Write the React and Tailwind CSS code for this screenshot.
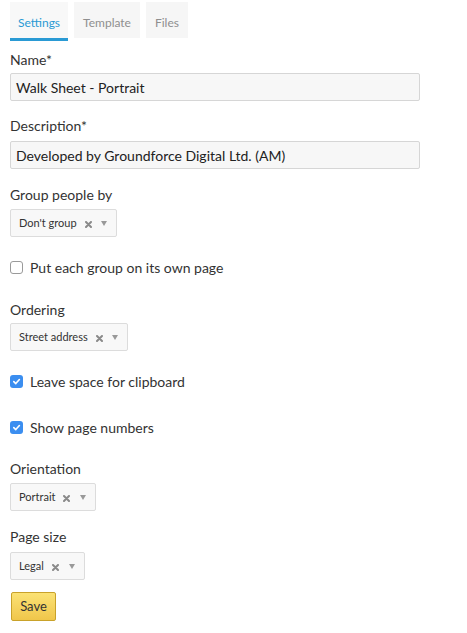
import React from 'react';

function Select({ value, width }) {
  return (
    <div
      className={`flex items-center h-7 pl-[8px] pr-[9px] bg-[#f8f8f8] border border-[#dcdcdc] rounded-[2px] text-[11px] text-[#333] ${width}`}
    >
      <span>{value}</span>
      <svg className="ml-[8px] mt-[2px]" width="7" height="7" viewBox="0 0 7 7">
        <path d="M1 1 L6 6 M6 1 L1 6" stroke="#8a8a8a" strokeWidth="2" strokeLinecap="round" />
      </svg>
      <svg className="ml-auto" width="6" height="5" viewBox="0 0 6 5">
        <path d="M0 0 H6 L3 5 Z" fill="#999" />
      </svg>
    </div>
  );
}

function Check({ checked, label, className }) {
  return (
    <label className={`flex items-center h-5 ${className}`}>
      {checked ? (
        <span className="w-[13px] h-[13px] rounded-[3px] bg-[#3b8ef0] flex items-center justify-center">
          <svg width="9" height="9" viewBox="0 0 10 10">
            <path d="M2 5.2 L4.2 7.3 L8.2 2.8" fill="none" stroke="#fff" strokeWidth="1.8" strokeLinecap="round" strokeLinejoin="round" />
          </svg>
        </span>
      ) : (
        <span className="w-[13px] h-[13px] rounded-[3px] bg-white border border-[#9a9a9a]" />
      )}
      <span className="ml-[7px] text-[14px] text-[#333]">{label}</span>
    </label>
  );
}

function Label({ children, className = '' }) {
  return <div className={`h-5 leading-5 text-[14px] text-[#333] ${className}`}>{children}</div>;
}

function TextInput({ value }) {
  return (
    <div className="h-7 w-[410px] flex items-center px-[5px] bg-[#f7f7f7] border border-[#d6d6d6] rounded-[2px] text-[14px] text-[#222]">
      {value}
    </div>
  );
}

export default function App() {
  return (
    <div className="w-[467px] h-[633px] bg-white px-[10px] pt-[2px]" style={{ fontFamily: 'Lato, "Open Sans", sans-serif' }}>
      <div className="flex gap-[6px]">
        <div className="h-[39px] px-[8px] flex items-center bg-[#f8f8f8] border-b-[3px] border-[#2a9ad4] text-[12px] text-[#2a9ad4] pt-[6px]">
          Settings
        </div>
        <div className="h-[36px] px-[9px] flex items-center bg-[#f6f6f6] text-[12px] text-[#8f8f8f] pt-[6px]">Template</div>
        <div className="h-[36px] px-[9px] flex items-center bg-[#f6f6f6] text-[12px] text-[#8f8f8f] pt-[6px]">Files</div>
      </div>

      <Label className="mt-[9px] mb-[3px]">Name*</Label>
      <TextInput value="Walk Sheet - Portrait" />

      <Label className="mt-[15px] mb-[5px]">Description*</Label>
      <TextInput value="Developed by Groundforce Digital Ltd. (AM)" />

      <Label className="mt-[16px] mb-[4px]">Group people by</Label>
      <Select value="Don't group" width="w-[107px]" />

      <Check className="mt-[20px]" label="Put each group on its own page" />

      <Label className="mt-[23px] mb-[3px]">Ordering</Label>
      <Select value="Street address" width="w-[118px]" />

      <Check className="mt-[20px]" checked label="Leave space for clipboard" />
      <Check className="mt-[26px]" checked label="Show page numbers" />

      <Label className="mt-[22px] mb-[4px]">Orientation</Label>
      <Select value="Portrait" width="w-[86px]" />

      <Label className="mt-[16px] mb-[5px]">Page size</Label>
      <Select value="Legal" width="w-[75px]" />

      <button className="mt-[12px] ml-[1px] h-[29px] w-[45px] rounded-[2px] border border-[#c9a22a] bg-gradient-to-b from-[#fbe274] to-[#f0c64a] text-[13px] text-[#333]">
        Save
      </button>
    </div>
  );
}
